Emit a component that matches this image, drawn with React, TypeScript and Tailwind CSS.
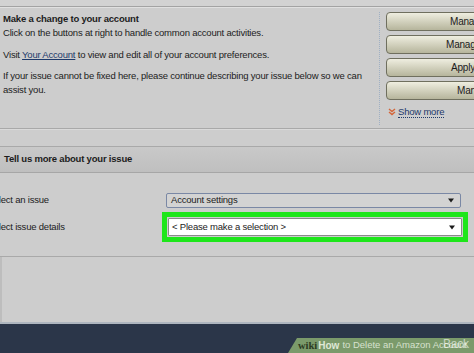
import React from "react";

const actions = [
  { label: "Manage Prime Membership", pad: "pl-[63px]" },
  { label: "Manage Payment Options", pad: "pl-[59px]" },
  { label: "Apply Gift Card to Account", pad: "pl-[64px]" },
  { label: "Manage Devices", pad: "pl-[70px]" },
];

function Caret() {
  return (
    <svg width="6" height="5" viewBox="0 0 6 5" className="shrink-0">
      <path d="M0 0.5h6L3 4.5z" fill="#1b1b1b" />
    </svg>
  );
}

function ShowMoreIcon() {
  return (
    <svg width="8" height="8" viewBox="0 0 8 8">
      <path d="M1 1l3 2.5L7 1M1 4l3 2.5L7 4" fill="none" stroke="#d4663a" strokeWidth="1.4" />
    </svg>
  );
}

export default function App() {
  return (
    <div className="relative h-[353px] w-[474px] overflow-hidden bg-[#cdcdcd] font-['Liberation_Sans',Arial,sans-serif] text-[9.5px] tracking-[-0.2px] text-[#1c1c1c]">
      <div className="h-[6px] bg-[#d2d2d2]" />
      <div className="h-px bg-[#a3a3a3]" />
      <div className="h-px bg-[#e0e0e0]" />

      {/* account panel */}
      <div className="flex h-[120px]">
        <div className="w-[379px] shrink-0 pl-[3px] pt-[4px] leading-[14px]">
          <div className="font-bold">Make a change to your account</div>
          <div>Click on the buttons at right to handle common account activities.</div>
          <div className="mt-[8px]">
            Visit{" "}
            <span className="text-[#1e3a6b] underline">Your Account</span> to
            view and edit all of your account preferences.
          </div>
          <div className="mt-[7px]">
            <span className="whitespace-nowrap">
              If your issue cannot be fixed here, please continue describing
              your issue below so we can
            </span>
            <br />
            assist you.
          </div>
        </div>
        <div className="mt-[4px] mb-[3px] shrink-0 border-l border-dotted border-[#9fb0c4] pl-[6px]">
          <div className="flex flex-col gap-[4px]">
            {actions.map((a) => (
              <div
                key={a.label}
                className={`flex h-[19px] w-[150px] items-center whitespace-nowrap rounded-[4px] border border-[#6f6f5e] bg-gradient-to-b from-[#efeee0] to-[#b6b59c] ${a.pad} text-[10px] leading-none`}
              >
                {a.label}
              </div>
            ))}
          </div>
          <div className="mt-[6px] flex items-center gap-[2px] pl-[2px]">
            <ShowMoreIcon />
            <span className="border-b border-dotted border-[#1e3a6b] leading-[11px] text-[#1e3a6b]">
              Show more
            </span>
          </div>
        </div>
      </div>
      <div className="h-px bg-[#a9a9a9]" />
      <div className="h-px bg-[#dadada]" />

      <div className="h-[16px]" />
      <div className="h-px bg-[#a9a9a9]" />

      {/* issue header */}
      <div className="flex h-[25px] items-center bg-gradient-to-b from-[#c9c9c9] to-[#bfbfbf] pl-[4px] font-bold">
        Tell us more about your issue
      </div>
      <div className="h-px bg-[#a6a6a6]" />

      {/* form */}
      <div className="pt-[20px]">
        <div className="flex h-[15px] items-center">
          <div className="ml-[-12.5px] w-[178.5px] shrink-0">Select an issue</div>
          <div className="flex h-[15px] w-[295px] shrink-0 items-center justify-between rounded-[2px] border border-[#7a88a5] bg-[#d3d3d3] pl-[4px] pr-[6px]">
            <span>Account settings</span>
            <Caret />
          </div>
        </div>
        <div className="mt-[4px] flex items-center">
          <div className="ml-[-12.5px] w-[174.5px] shrink-0">Select issue details</div>
          <div className="w-[306px] shrink-0 border-[5px] border-[#1ee61b] p-px">
            <div className="flex h-[18px] items-center justify-between rounded-[1px] border border-[#8a8a8a] bg-white pl-[3px] pr-[6px]">
              <span>&lt; Please make a selection &gt;</span>
              <Caret />
            </div>
          </div>
        </div>
      </div>

      <div className="mt-[14px] h-px bg-[#a9a9a9]" />
      <div className="flex h-[65px]">
        <div className="w-[2px] bg-[#bdbdbd]" />
      </div>

      {/* footer */}
      <div className="h-[2px] bg-[#aeb6bf]" />
      <div className="flex h-[29px] flex-col justify-end bg-[#2b3649]">
        <div className="ml-[288px] flex h-[15px] items-center gap-[3px] whitespace-nowrap bg-[#7b9a6b] pl-[10px] tracking-normal [clip-path:polygon(9px_0,100%_0,100%_100%,0_100%)]">
          <span className="font-['Liberation_Serif',serif] text-[10.5px] font-bold text-[#2c3a22]">wiki</span>
          <span className="-ml-[2px] text-[10px] font-bold text-[#dfe8d6]">How</span>
          <span className="text-[9.5px] text-[#d7e1ce]">to Delete an Amazon Account</span>
        </div>
      </div>
      <div className="absolute left-[443px] top-[335px] text-[12px] text-white/60">Back to</div>
    </div>
  );
}
